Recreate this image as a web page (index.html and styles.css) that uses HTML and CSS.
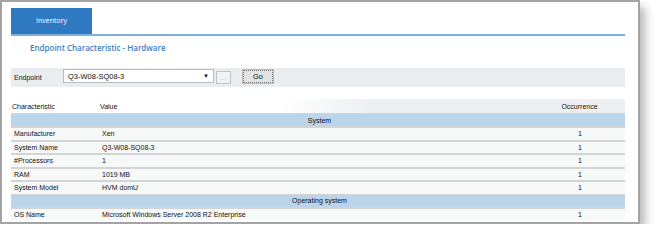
FILE: index.html
```html
<!DOCTYPE html>
<html lang="en">
<head>
  <meta charset="UTF-8" />
  <title>Inventory</title>
  <link rel="stylesheet" href="styles.css">
</head>
<body>
  <div class="window">
    <div class="tabs">
      <div class="tab">Inventory</div>
    </div>
    <div class="title">Endpoint Characteristic - Hardware</div>

    <div class="toolbar">
      <span class="label">Endpoint</span>
      <div class="select">
        <span>Q3-W08-SQ08-3</span>
        <span class="arrow">&#9660;</span>
      </div>
      <button class="btn-dots">...</button>
      <button class="btn-go">Go</button>
    </div>

    <table class="grid">
      <thead>
        <tr>
          <th class="c-name">Characteristic</th>
          <th class="c-value">Value</th>
          <th class="c-occ">Occurrence</th>
        </tr>
      </thead>
      <tbody>
        <tr class="section"><td colspan="3">System</td></tr>
        <tr><td>Manufacturer</td><td>Xen</td><td class="c-occ">1</td></tr>
        <tr><td>System Name</td><td>Q3-W08-SQ08-3</td><td class="c-occ">1</td></tr>
        <tr><td>#Processors</td><td>1</td><td class="c-occ">1</td></tr>
        <tr><td>RAM</td><td>1019 MB</td><td class="c-occ">1</td></tr>
        <tr><td>System Model</td><td>HVM domU</td><td class="c-occ">1</td></tr>
        <tr class="section"><td colspan="3">Operating system</td></tr>
        <tr><td>OS Name</td><td>Microsoft Windows Server 2008 R2 Enterprise</td><td class="c-occ">1</td></tr>
      </tbody>
    </table>
  </div>
</body>
</html>
```

FILE: styles.css
```css
body {
  margin: 0;
  background: #fff;
  font-family: "Liberation Sans", Arial, sans-serif;
}

.window {
  width: 640px;
  height: 224px;
  border: 2px solid #a3a3a3;
  background: #fff;
  box-shadow: 5px 7px 9px rgba(0, 0, 0, 0.28);
  padding: 6px 13px 0 9px;
  box-sizing: border-box;
  overflow: hidden;
}

.tabs {
  border-bottom: 2px solid #7fb0dd;
  height: 26px;
}

.tab {
  width: 81px;
  height: 26px;
  background: #2f78c2;
  color: #fff;
  font-family: "Open Sans", sans-serif;
  font-size: 7px;
  text-align: center;
  line-height: 26px;
}

.title {
  font-family: "Open Sans", sans-serif;
  font-weight: 600;
  font-size: 8px;
  color: #3b7fc2;
  padding: 6px 0 0 19px;
  height: 19px;
}

.toolbar {
  display: flex;
  align-items: center;
  height: 19px;
  margin-top: 7px;
  background: #e9edf0;
  padding-left: 3px;
  font-size: 7px;
  color: #111;
}

.label {
  width: 49px;
}

.select {
  width: 151px;
  height: 14px;
  background: #fff;
  border: 1px solid #b9bec3;
  display: flex;
  align-items: center;
  justify-content: space-between;
  padding: 0 4px;
  box-sizing: border-box;
  font-size: 7.5px;
  margin-top: -3px;
}

.arrow {
  font-size: 6px;
}

.btn-dots {
  width: 15px;
  height: 13px;
  margin-left: 2px;
  padding: 0;
  font-size: 6px;
  color: #999;
  background: #f0f2f4;
  border: 1px solid #b8c4d0;
}

.btn-go {
  width: 30px;
  height: 13px;
  margin-left: 12px;
  margin-top: -2px;
  padding: 0;
  font-family: "Liberation Sans", Arial, sans-serif;
  font-size: 7.5px;
  color: #111;
  background: #e3e3e3;
  border: 1px dotted #777;
  outline: 1px solid #b9bec3;
}

.grid {
  width: 100%;
  border-collapse: collapse;
  margin-top: 12px;
  font-size: 7px;
  color: #111;
}

.grid th {
  font-weight: normal;
  text-align: left;
  height: 14px;
  padding: 0 0 0 1px;
  background: #fff;
}

.grid th.c-value {
  padding-left: 0;
  background: linear-gradient(to right, #fff 0%, #fff 40%, #edf0f3 60%);
}

.grid th.c-occ {
  text-align: center;
  background: #edf0f3;
}

.c-name {
  width: 88px;
}

.c-occ {
  width: 60px;
  padding-right: 15px !important;
  text-align: center;
}

.grid td {
  height: 11.5px;
  padding: 0 0 0 3px;
  background: #f7f8f8;
  border-top: 2px solid #d2d4d6;
}

.grid td + td {
  padding-left: 2px;
}

.grid tr.section td {
  background: #bcd4ea;
  text-align: center;
  height: 12px;
  border-top: 1px solid #d2d4d6;
}
```
